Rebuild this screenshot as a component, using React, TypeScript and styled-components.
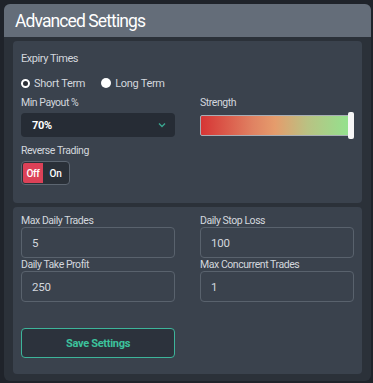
import React, { useState } from 'react';
import styled, { createGlobalStyle } from 'styled-components';

const GlobalStyle = createGlobalStyle`
  html, body {
    margin: 0;
    padding: 0;
    background: #1f232a;
    font-family: Roboto, "Noto Sans", sans-serif;
  }
`;

const Page = styled.div`
  width: 373px;
  height: 383px;
  padding: 4px 2px 2px 4px;
  box-sizing: border-box;
`;

const Card = styled.div`
  background: #2b3139;
  border-radius: 6px;
  height: 377px;
  overflow: hidden;
  display: flex;
  flex-direction: column;
`;

const Header = styled.div`
  background: #646d79;
  height: 33px;
  padding: 0 11px;
  display: flex;
  align-items: center;
  color: #fff;
  font-size: 17.5px;
  font-weight: 400;
  letter-spacing: -0.9px;
`;

const Body = styled.div`
  padding: 4px 9px 7px 9px;
  display: flex;
  flex-direction: column;
  gap: 4px;
`;

const Section = styled.div<{ $h: number; $top: number }>`
  background: #3a424d;
  border-radius: 4px;
  height: ${p => p.$h}px;
  box-sizing: border-box;
  padding: ${p => p.$top}px 8px 0 8px;
`;

const Label = styled.div<{ $size?: number }>`
  color: #d3d7dd;
  font-size: ${p => p.$size ?? 10.5}px;
  letter-spacing: -0.45px;
  line-height: 13px;
`;

const RadioRow = styled.div`
  display: flex;
  align-items: center;
  gap: 16px;
  margin-top: 11px;
  height: 14px;
`;

const Radio = styled.label`
  display: flex;
  align-items: center;
  gap: 4px;
  color: #d3d7dd;
  font-size: 11px;
  letter-spacing: -0.3px;
`;

const Dot = styled.span<{ $on: boolean }>`
  width: ${p => (p.$on ? 9 : 10)}px;
  height: ${p => (p.$on ? 9 : 10)}px;
  border-radius: 50%;
  background: ${p => (p.$on ? '#2b2f36' : '#fff')};
  border: ${p => (p.$on ? '2px solid #fff' : '0')};
  box-sizing: border-box;
  display: inline-block;
`;

const Grid = styled.div<{ $rowGap: number }>`
  display: grid;
  grid-template-columns: 154px 154px;
  column-gap: 25px;
  row-gap: ${p => p.$rowGap}px;
`;

const Field = styled.div<{ $gap: number }>`
  display: flex;
  flex-direction: column;
  gap: ${p => p.$gap}px;
`;

const Select = styled.div`
  height: 24px;
  background: #262c35;
  border-radius: 4px;
  display: flex;
  align-items: center;
  justify-content: space-between;
  padding: 0 9px 0 11px;
  color: #fff;
  font-weight: 700;
  font-size: 11px;
  letter-spacing: -0.3px;
`;

const Strength = styled.div`
  position: relative;
  height: 21px;
  margin-top: 2px;
  width: 150px;
  border: 1px solid #a7adb5;
  border-radius: 2px;
  box-sizing: border-box;
  background: linear-gradient(90deg, #d63535 0%, #e08262 35%, #e59c6c 50%, #b9c283 72%, #93e28e 100%);
`;

const Thumb = styled.span`
  position: absolute;
  right: -5px;
  top: -4px;
  width: 6px;
  height: 27px;
  border-radius: 2px;
  background: #f6f6f6;
`;

const Toggle = styled.div`
  display: inline-flex;
  width: 49px;
  height: 24px;
  border: 1px solid #5d6671;
  border-radius: 4px;
  box-sizing: border-box;
  padding: 1px;
  background: #2a3038;
`;

const ToggleOpt = styled.span<{ $active?: boolean }>`
  flex: ${p => (p.$active ? '0 0 20px' : '1')};
  display: flex;
  align-items: center;
  justify-content: center;
  font-size: 10px;
  font-weight: 500;
  letter-spacing: -0.3px;
  color: #fff;
  background: ${p => (p.$active ? '#dc4157' : 'transparent')};
  border-radius: 2px 0 0 2px;
`;

const Input = styled.div`
  height: 31px;
  border: 1px solid #59626d;
  border-radius: 4px;
  box-sizing: border-box;
  display: flex;
  align-items: center;
  padding-left: 10px;
  color: #d3d7dd;
  font-size: 11.5px;
  letter-spacing: -0.2px;
`;

const SaveButton = styled.button`
  margin-top: 26px;
  width: 154px;
  height: 30px;
  border: 1px solid #3db49a;
  border-radius: 4px;
  background: #2c323c;
  color: #3cc29d;
  font-family: Roboto, sans-serif;
  font-weight: 700;
  font-size: 11px;
  letter-spacing: -0.3px;
`;

const Chevron = () => (
  <svg width="8" height="6" viewBox="0 0 8 6">
    <path d="M1 1.5 L4 4.5 L7 1.5" stroke="#3aa58f" strokeWidth="1.4" fill="none" />
  </svg>
);

const fields = [
  ['Max Daily Trades', '5'],
  ['Daily Stop Loss', '100'],
  ['Daily Take Profit', '250'],
  ['Max Concurrent Trades', '1'],
];

export default function App() {
  const [term, setTerm] = useState('short');
  return (
    <Page>
      <GlobalStyle />
      <Card>
        <Header>Advanced Settings</Header>
        <Body>
          <Section $h={162} $top={11}>
            <Label $size={11}>Expiry Times</Label>
            <RadioRow>
              <Radio onClick={() => setTerm('short')}>
                <Dot $on={term === 'short'} /> Short Term
              </Radio>
              <Radio onClick={() => setTerm('long')}>
                <Dot $on={term === 'long'} /> Long Term
              </Radio>
            </RadioRow>
            <Grid $rowGap={7} style={{ marginTop: 6 }}>
              <Field $gap={4}>
                <Label>Min Payout %</Label>
                <Select>
                  70%
                  <Chevron />
                </Select>
              </Field>
              <Field $gap={4}>
                <Label>Strength</Label>
                <Strength>
                  <Thumb />
                </Strength>
              </Field>
              <Field $gap={4}>
                <Label>Reverse Trading</Label>
                <Toggle>
                  <ToggleOpt $active>Off</ToggleOpt>
                  <ToggleOpt>On</ToggleOpt>
                </Toggle>
              </Field>
            </Grid>
          </Section>
          <Section $h={167} $top={7}>
            <Grid $rowGap={0}>
              {fields.map(([label, value]) => (
                <Field key={label} $gap={0}>
                  <Label>{label}</Label>
                  <Input>{value}</Input>
                </Field>
              ))}
            </Grid>
            <SaveButton>Save Settings</SaveButton>
          </Section>
        </Body>
      </Card>
    </Page>
  );
}
